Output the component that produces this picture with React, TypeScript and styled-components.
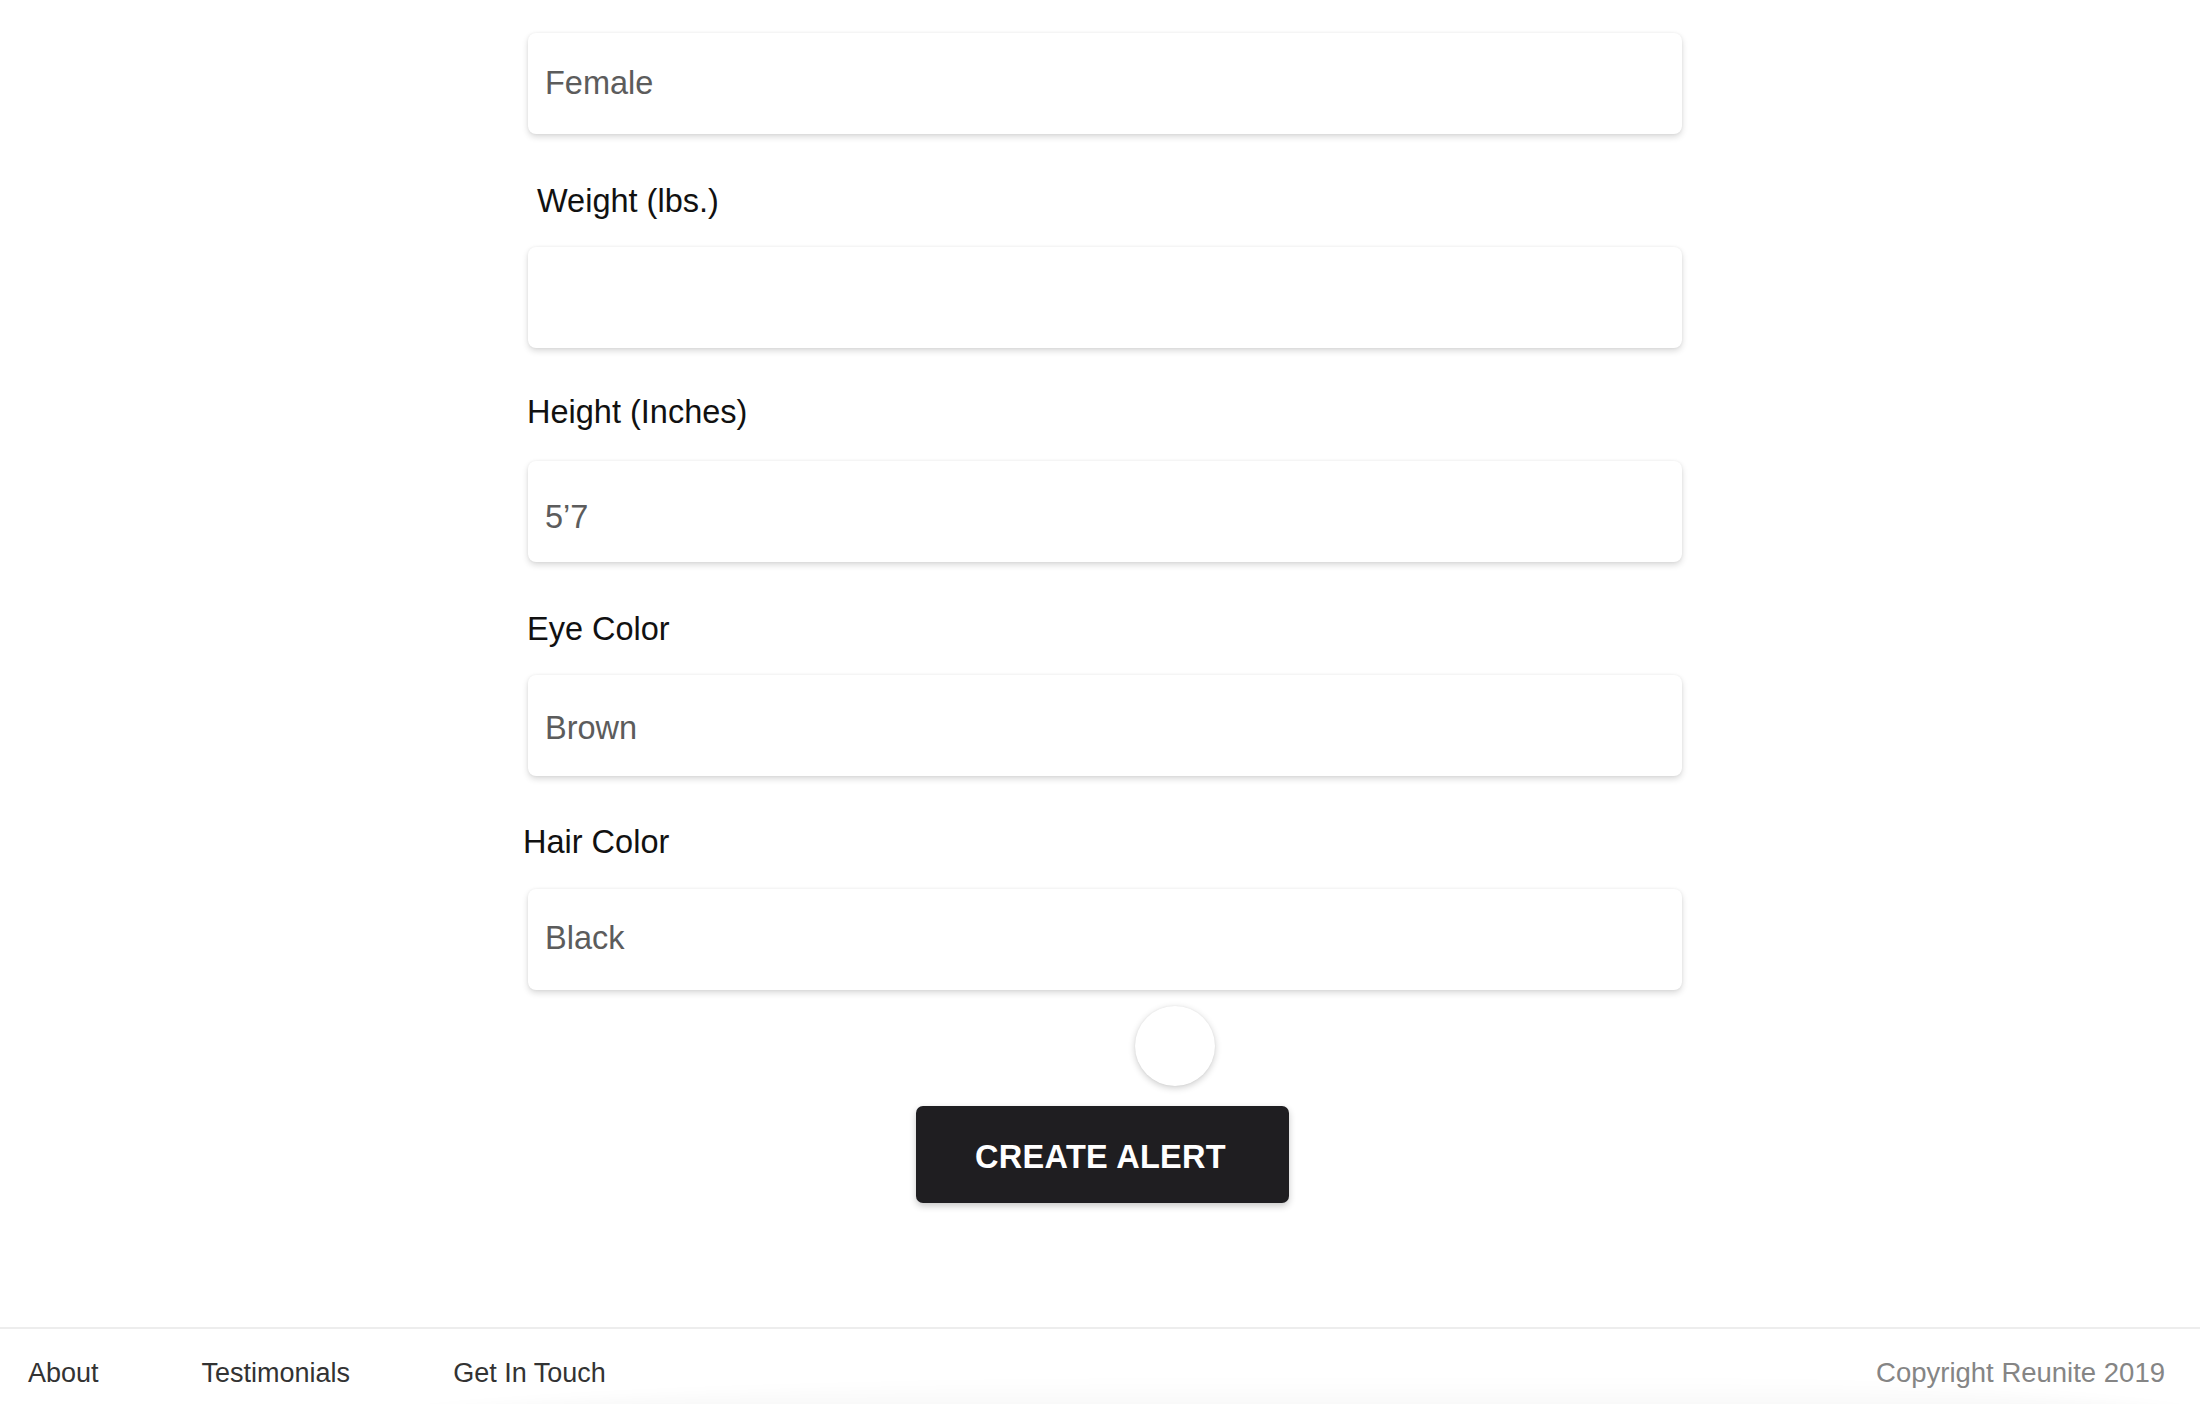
import React from "react";
import styled, { createGlobalStyle } from "styled-components";

const GlobalStyle = createGlobalStyle`
  html, body {
    margin: 0;
    padding: 0;
    background: #ffffff;
  }
  body {
    font-family: "Liberation Sans", Arial, Helvetica, sans-serif;
    overflow: hidden;
  }
  * { box-sizing: border-box; }
`;

const Page = styled.div`
  width: 2200px;
  height: 1404px;
  display: flex;
  flex-direction: column;
  background: #ffffff;
`;

const Main = styled.main`
  flex: 1;
  padding: 33px 0 0 528px;
`;

const Form = styled.form`
  width: 1154px;
  display: flex;
  flex-direction: column;
`;

const Field = styled.div<{ $first?: boolean }>`
  display: flex;
  flex-direction: column;
  margin-top: ${(p) => (p.$first ? "0" : "51px")};
`;

const Label = styled.label<{ $indent: number; $lift: number }>`
  display: block;
  font-size: 32.5px;
  line-height: 32px;
  color: #111111;
  margin: ${(p) => -p.$lift}px 0 ${(p) => 30 + p.$lift}px ${(p) => p.$indent}px;
  white-space: nowrap;
`;

const Input = styled.input<{ $drop: number }>`
  display: block;
  width: 100%;
  height: 101px;
  border: none;
  outline: none;
  border-radius: 8px;
  background: #ffffff;
  padding-left: 17px;
  padding-right: 0;
  padding-top: ${(p) => Math.max(p.$drop, 0)}px;
  padding-bottom: ${(p) => Math.max(-p.$drop, 0)}px;
  font-family: "Liberation Sans", Arial, Helvetica, sans-serif;
  font-size: 32.5px;
  color: #5c5c5c;
  box-shadow: 0 3px 6px rgba(0, 0, 0, 0.15), 0 0 3px rgba(0, 0, 0, 0.06);
`;

const PhotoRow = styled.div`
  display: flex;
  padding-left: 607px;
  margin-top: 16px;
`;

const PhotoCircle = styled.div`
  width: 80px;
  height: 80px;
  border-radius: 50%;
  background: #ffffff;
  box-shadow: 0 2px 7px rgba(0, 0, 0, 0.2), 0 0 2px rgba(0, 0, 0, 0.06);
`;

const SubmitButton = styled.button`
  align-self: flex-start;
  margin: 20px 0 0 388px;
  width: 373px;
  height: 97px;
  padding: 6px 4px 0 0;
  border: none;
  border-radius: 7px;
  background: #1f1e21;
  color: #ffffff;
  font-family: "Liberation Sans", Arial, Helvetica, sans-serif;
  font-weight: 700;
  font-size: 32.5px;
  letter-spacing: 0.3px;
  box-shadow: 0 3px 7px rgba(0, 0, 0, 0.22);
  cursor: pointer;
`;

const Footer = styled.footer`
  position: relative;
  height: 77px;
  border-top: 2px solid #ededed;
  display: flex;
  align-items: baseline;
  justify-content: space-between;
  padding: 30px 35px 0 28px;
  overflow: hidden;

  &::after {
    content: "";
    position: absolute;
    left: 340px;
    right: -40px;
    bottom: -30px;
    height: 56px;
    border-radius: 60% 40% 0 0 / 100% 100% 0 0;
    background: linear-gradient(to bottom, rgba(0, 0, 0, 0), rgba(0, 0, 0, 0.05));
    filter: blur(6px);
    pointer-events: none;
  }
`;

const FooterNav = styled.nav`
  display: flex;
  align-items: baseline;
  gap: 103px;
  position: relative;
  z-index: 1;
`;

const FooterLink = styled.a`
  font-size: 27px;
  line-height: 27px;
  color: #333333;
  text-decoration: none;
`;

const Copyright = styled.span`
  font-size: 27.5px;
  line-height: 27px;
  color: #858585;
  position: relative;
  z-index: 1;
`;

type FieldDef = { label?: string; value: string; indent: number; lift: number; drop: number };

const fields: FieldDef[] = [
  { value: "Female", indent: 0, lift: 0, drop: 0 },
  { label: "Weight (lbs.)", value: "", indent: 9, lift: 0, drop: 0 },
  { label: "Height (Inches)", value: "5’7", indent: -1, lift: 3, drop: 12 },
  { label: "Eye Color", value: "Brown", indent: -1, lift: 0, drop: 5 },
  { label: "Hair Color", value: "Black", indent: -5, lift: 1, drop: -3 },
];

export default function App() {
  return (
    <>
      <GlobalStyle />
      <Page>
        <Main>
          <Form onSubmit={(e) => e.preventDefault()}>
            {fields.map((f, i) => (
              <Field key={i} $first={i === 0}>
                {f.label && (
                  <Label $indent={f.indent} $lift={f.lift}>
                    {f.label}
                  </Label>
                )}
                <Input readOnly value={f.value} $drop={f.drop} />
              </Field>
            ))}
            <PhotoRow>
              <PhotoCircle />
            </PhotoRow>
            <SubmitButton type="submit">CREATE ALERT</SubmitButton>
          </Form>
        </Main>
        <Footer>
          <FooterNav>
            <FooterLink href="#">About</FooterLink>
            <FooterLink href="#">Testimonials</FooterLink>
            <FooterLink href="#">Get In Touch</FooterLink>
          </FooterNav>
          <Copyright>Copyright Reunite 2019</Copyright>
        </Footer>
      </Page>
    </>
  );
}
